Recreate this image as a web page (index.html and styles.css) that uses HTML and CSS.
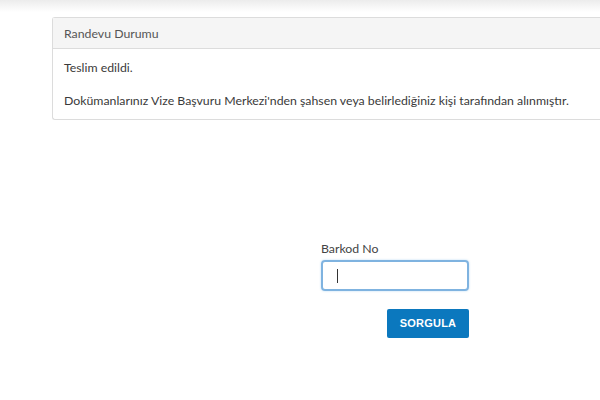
FILE: index.html
```html
<!DOCTYPE html>
<html lang="tr">
<head>
<meta charset="utf-8">
<link rel="stylesheet" href="styles.css">
</head>
<body>
<div class="shade"></div>
<div class="panel">
  <div class="panel-head">Randevu Durumu</div>
  <div class="panel-body">
    <p class="line">Teslim edildi.</p>
    <p class="line">Dokümanlarınız Vize Başvuru Merkezi'nden şahsen veya belirlediğiniz kişi tarafından alınmıştır.</p>
  </div>
</div>
<div class="form">
  <label class="label">Barkod No</label>
  <div class="input"><span class="caret"></span></div>
  <div class="actions"><span class="btn">SORGULA</span></div>
</div>
</body>
</html>
```
FILE: styles.css
```css
html, body {
  margin: 0;
  padding: 0;
  background: #fff;
  overflow: hidden;
  width: 600px;
  height: 400px;
  font-family: "Lato", "Noto Sans", sans-serif;
  color: #444;
}
.shade {
  height: 12px;
  background: linear-gradient(#ececec, #fff);
}
.panel {
  margin: 5px 0 0 52px;
  border: 1px solid #dcdcdc;
  border-right: none;
  border-radius: 3px 0 0 3px;
}
.panel-head {
  height: 30px;
  line-height: 32px;
  padding-left: 11px;
  background: #f5f5f5;
  border-bottom: 1px solid #dcdcdc;
  font-size: 12.3px;
  color: #555;
}
.panel-body {
  padding: 11px 11px 10px;
}
.line {
  margin: 0;
  font-size: 12.3px;
  line-height: 16px;
  color: #3a3a3a;
}
.line + .line {
  margin-top: 17px;
}
.form {
  margin: 121px 0 0 321px;
  width: 148px;
  display: flex;
  flex-direction: column;
}
.label {
  font-size: 12.3px;
  color: #444;
  line-height: 16px;
}
.input {
  margin-top: 3px;
  height: 27px;
  border: 2px solid #7fb3e0;
  border-radius: 4px;
  box-shadow: 0 0 2px rgba(102,175,233,0.5);
  display: flex;
  align-items: center;
  padding-left: 14px;
}
.caret {
  width: 1px;
  height: 14px;
  background: #333;
}
.actions {
  margin-top: 18px;
  display: flex;
  justify-content: flex-end;
}
.btn {
  width: 82px;
  height: 29px;
  line-height: 29px;
  text-align: center;
  background: #0b78be;
  color: #fff;
  font-weight: bold;
  font-size: 11px;
  letter-spacing: 0.2px;
  border-radius: 2px;
  font-family: "Liberation Sans", Arial, sans-serif;
}
```
